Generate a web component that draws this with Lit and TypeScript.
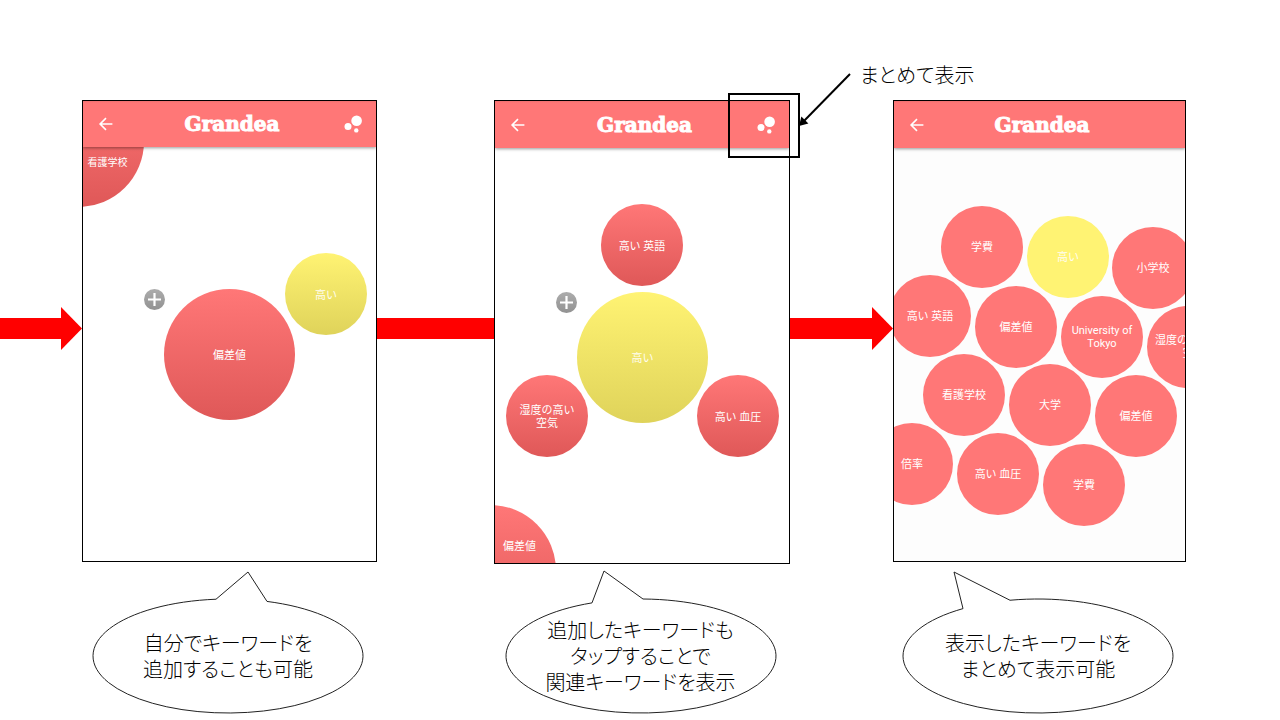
import { LitElement, html, css, svg, nothing } from "lit";
import { customElement, property } from "lit/decorators.js";
import { classMap } from "lit/directives/class-map.js";
import { styleMap } from "lit/directives/style-map.js";

type Tone = "red" | "yellow";

interface Bubble {
  lines: string[];
  x: number;
  y: number;
  size: "large" | "small";
  tone: Tone;
  edge?: "top" | "bottom";
}

interface Screen {
  width: number;
  flat?: boolean;
  tall?: boolean;
  menu?: boolean;
  add?: { x: number; y: number };
  bubbles: Bubble[];
}

const b = (
  text: string,
  x: number,
  y: number,
  size: "large" | "small" = "small",
  tone: Tone = "red",
  edge?: "top" | "bottom"
): Bubble => ({ lines: text.split("|"), x, y, size, tone, edge });

/* Bubble positions are the left and top of each circle on the phone's canvas. */
const keywordScreen: Screen = {
  width: 293,
  menu: true,
  add: { x: 61, y: 188 },
  bubbles: [
    b("看護学校", -70, -25, "large", "red", "top"),
    b("偏差値", 81, 188, "large"),
    b("高い", 202, 152, "small", "yellow"),
  ],
};

const relatedScreen: Screen = {
  width: 294,
  menu: true,
  tall: true,
  add: { x: 61, y: 191 },
  bubbles: [
    b("高い 英語", 106, 103),
    b("高い", 82, 191, "large", "yellow"),
    b("湿度の高い|空気", 11, 274),
    b("高い 血圧", 202, 274),
    b("偏差値", -70, 404, "large", "red", "bottom"),
  ],
};

const overviewScreen: Screen = {
  width: 291,
  flat: true,
  bubbles: [
    b("学費", 47, 105),
    b("高い", 133, 115, "small", "yellow"),
    b("小学校", 218, 126),
    b("高い 英語", -5, 174),
    b("偏差値", 81, 185),
    b("University of|Tokyo", 167, 195),
    b("湿度の高い\u00a0\u00a0\u00a0\u00a0|空", 253, 205),
    b("看護学校", 29, 253),
    b("大学", 115, 263),
    b("偏差値", 201, 274),
    b("倍率", -23, 322),
    b("高い 血圧", 63, 332),
    b("学費", 149, 343),
  ],
};

@customElement("phone-screen")
export class PhoneScreen extends LitElement {
  @property({ attribute: false }) screen!: Screen;

  static styles = css`
    :host {
      display: block;
    }
    .phone {
      position: relative;
      box-sizing: border-box;
      height: 462px;
      border: 1px solid #000;
      overflow: hidden;
      background: #fff;
      color: #fff;
      font-family: Roboto, "Noto Sans CJK JP", sans-serif;
    }
    .phone.tall {
      height: 464px;
    }
    .phone.flat {
      background: #fdfdfd;
    }
    .bar {
      position: relative;
      z-index: 1;
      display: flex;
      align-items: center;
      box-sizing: border-box;
      height: 46px;
      padding: 0 14px 0 13px;
      background: linear-gradient(#ee7070, #ff7777 2px);
      box-shadow: 0 1px 3px rgba(0, 0, 0, 0.4);
    }
    .tall .bar,
    .flat .bar {
      height: 47px;
    }
    .icon-button {
      display: block;
      flex: none;
      padding: 0;
      border: 0;
      background: none;
      color: inherit;
    }
    .icon-button svg {
      display: block;
    }
    .back {
      width: 20px;
      margin-right: 4px;
    }
    .menu {
      width: 18px;
      height: 18px;
    }
    .title {
      flex: 1;
      margin: 0;
      text-align: center;
      font: 700 20px/24px "DejaVu Serif", serif;
      -webkit-text-stroke: 1px #fff;
    }
    .bubble {
      position: absolute;
      display: flex;
      align-items: center;
      justify-content: center;
      box-sizing: border-box;
      width: 82px;
      height: 82px;
      padding: 2px 0 0;
      border: 0;
      border-radius: 50%;
      color: #fff;
      background: linear-gradient(#ff7777, #df5858);
      font: 400 11px/13px Roboto, "Noto Sans CJK JP", sans-serif;
      text-align: center;
      white-space: nowrap;
    }
    .bubble.large {
      width: 131px;
      height: 131px;
    }
    .bubble.yellow {
      background: linear-gradient(#fff373, #dfd35a);
      color: #fffdf0;
    }
    .flat .bubble {
      padding: 0;
      background: #ff7777;
    }
    .flat .bubble.yellow {
      background: #fff373;
    }
    /* Labels of clipped circles are kept inside the visible quarter. */
    .bubble.top {
      padding: 42px 0 0 58px;
      font-size: 10px;
    }
    .bubble.bottom {
      padding: 0 0 48px 58px;
    }
    .line {
      display: block;
    }
    .add {
      position: absolute;
      width: 21px;
      height: 21px;
      padding: 0;
      border: 0;
      border-radius: 50%;
      background: linear-gradient(#acacac, #929292);
    }
    .add svg {
      display: block;
    }
  `;

  private place(x: number, y: number) {
    return styleMap({ left: `${(x / this.screen.width) * 100}%`, top: `${y}px` });
  }

  render() {
    const s = this.screen;
    return html`
      <section class=${classMap({ phone: true, tall: !!s.tall, flat: !!s.flat })}>
        <header class="bar">
          <button class="icon-button back" aria-label="Back">
            <svg width="20" height="20" viewBox="0 0 20 20" fill="none" stroke="#fff" stroke-width="1.6">
              <path d="M16.4 10H4.4M10 4.1L4.1 10L10 15.9" />
            </svg>
          </button>
          <h1 class="title">Grandea</h1>
          ${s.menu
            ? html`<button class="icon-button menu" aria-label="Overview">
                <svg width="18" height="18" viewBox="0 0 18 18" fill="#fff">
                  <circle cx="12.6" cy="5.7" r="5.3" />
                  <circle cx="4" cy="11.6" r="3.5" />
                  <circle cx="12.3" cy="15.4" r="2.2" />
                </svg>
              </button>`
            : html`<span class="menu"></span>`}
        </header>
        ${s.bubbles.map(
          (i) => html`<button
            class=${classMap({
              bubble: true,
              large: i.size === "large",
              yellow: i.tone === "yellow",
              top: i.edge === "top",
              bottom: i.edge === "bottom",
            })}
            style=${this.place(i.x, i.y)}
          >
            <span>${i.lines.map((l) => html`<span class="line">${l}</span>`)}</span>
          </button>`
        )}
        ${s.add
          ? html`<button class="add" aria-label="Add" style=${this.place(s.add.x, s.add.y)}>
              <svg width="21" height="21" viewBox="0 0 21 21" stroke="#fff" stroke-width="2.2">
                <path d="M10.5 4V17M4 10.5H17" />
              </svg>
            </button>`
          : nothing}
      </section>
    `;
  }
}

interface Callout {
  lines: string[];
  from: number;
  to: number;
  tip: [number, number];
}

const callouts: Callout[] = [
  { lines: ["自分でキーワードを", "追加することも可能"], from: 124, to: 175, tip: [156, 2] },
  { lines: ["追加したキーワードも", "タップすることで", "関連キーワードを表示"], from: 87, to: 138, tip: [99, 1] },
  { lines: ["表示したキーワードを", "まとめて表示可能"], from: 61, to: 108, tip: [52, 2] },
];

@customElement("speech-callout")
export class SpeechCallout extends LitElement {
  @property({ attribute: false }) data!: Callout;

  static styles = css`
    :host {
      display: grid;
      justify-content: center;
      padding: 6px 3px 0 0;
    }
    .shape,
    .text {
      grid-area: 1 / 1;
    }
    .shape {
      display: block;
    }
    .text {
      align-self: center;
      margin: 0;
      padding-top: 28px;
      text-align: center;
      white-space: nowrap;
    }
    .line {
      display: block;
    }
  `;

  private outline() {
    const { from, to, tip } = this.data;
    const edge = (x: number) => 86 - 57 * Math.sqrt(1 - ((x - 136) / 135) ** 2);
    return `M${to} ${edge(to)}A135 57 0 1 1 ${from} ${edge(from)}L${tip[0]} ${tip[1]}Z`;
  }

  render() {
    return html`
      <svg class="shape" width="272" height="144" viewBox="0 0 272 144" fill="#fff" stroke="#222">
        ${svg`<path d=${this.outline()} />`}
      </svg>
      <p class="text">${this.data.lines.map((l) => html`<span class="line">${l}</span>`)}</p>
    `;
  }
}

@customElement("app-root")
export class AppRoot extends LitElement {
  static styles = css`
    :host {
      display: block;
      min-height: 100vh;
      overflow: hidden;
      background: #fff;
      color: #000;
      font: 300 20px/26px "Noto Sans CJK JP", sans-serif;
      font-feature-settings: "palt";
    }
    .slide {
      display: grid;
      grid-template-columns:
        minmax(0, 82fr) minmax(0, 295fr) minmax(0, 117fr) minmax(0, 296fr)
        minmax(0, 103fr) minmax(0, 293fr) minmax(0, 94fr);
      grid-template-rows: 100px auto auto;
    }
    .note {
      grid-area: 1 / 5 / 2 / 8;
      z-index: 2;
      display: flex;
      align-items: flex-start;
      gap: 8px;
      padding-top: 62px;
      height: 38px;
      white-space: nowrap;
    }
    .note svg {
      flex: none;
    }
    .step {
      position: relative;
      grid-row: 2;
    }
    .highlight {
      position: absolute;
      z-index: 2;
      top: -7px;
      right: -10px;
      box-sizing: border-box;
      width: 72px;
      height: 65px;
      border: 2px solid #000;
    }
    .flow {
      grid-row: 2;
      display: flex;
      align-items: center;
      height: 43px;
      margin-top: 207px;
    }
    .shaft {
      flex: 1;
      height: 21px;
      background: #f00;
    }
    .head {
      width: 21px;
      height: 43px;
      background: #f00;
      clip-path: polygon(0 0, 100% 50%, 0 100%);
    }
    .c1 {
      grid-column: 1;
    }
    .c2 {
      grid-column: 2;
    }
    .c3 {
      grid-column: 3;
    }
    .c4 {
      grid-column: 4;
    }
    .c5 {
      grid-column: 5;
    }
    .c6 {
      grid-column: 6;
    }
    .callout {
      grid-row: 3;
    }
  `;

  render() {
    return html`
      <main class="slide">
        <div class="note">
          <svg width="62" height="66" viewBox="0 0 62 66" aria-hidden="true">
            <path d="M60 12L13 60" stroke="#000" stroke-width="2" />
            <path d="M9 64L11.4 54.6L18.4 61.6Z" />
          </svg>
          <span>まとめて表示</span>
        </div>
        <div class="flow c1"><div class="shaft"></div><div class="head"></div></div>
        <div class="step c2"><phone-screen .screen=${keywordScreen}></phone-screen></div>
        <div class="flow c3"><div class="shaft"></div></div>
        <div class="step c4">
          <phone-screen .screen=${relatedScreen}></phone-screen>
          <div class="highlight"></div>
        </div>
        <div class="flow c5"><div class="shaft"></div><div class="head"></div></div>
        <div class="step c6"><phone-screen .screen=${overviewScreen}></phone-screen></div>
        <speech-callout class="callout c2" .data=${callouts[0]}></speech-callout>
        <speech-callout class="callout c4" .data=${callouts[1]}></speech-callout>
        <speech-callout class="callout c6" .data=${callouts[2]}></speech-callout>
      </main>
    `;
  }
}
